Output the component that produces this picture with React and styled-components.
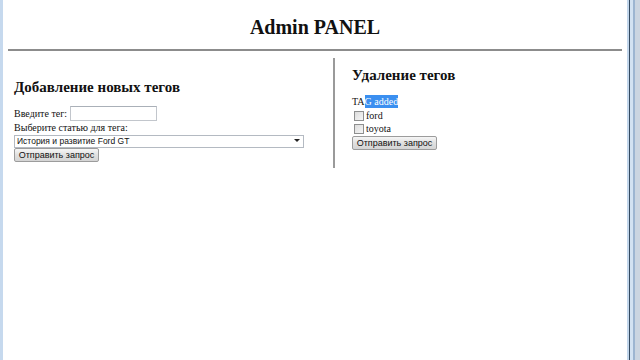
import React from "react";
import styled, { createGlobalStyle } from "styled-components";

const GlobalStyle = createGlobalStyle`
  html, body {
    margin: 0;
    padding: 0;
    height: 100%;
  }
  body {
    font-family: "Liberation Serif", "Times New Roman", serif;
    color: #111;
    background: #fff;
  }
`;

const Frame = styled.div`
  display: flex;
  height: 360px;
  width: 640px;
  overflow: hidden;
`;

const LeftEdge = styled.div`
  width: 3px;
  background: #c6d9ee;
`;

const RightEdge = styled.div`
  width: 13px;
  background: linear-gradient(
    to right,
    #c3d7ec 0px,
    #c3d7ec 2px,
    #34495f 2px,
    #34495f 3px,
    #d3e2f2 3px,
    #d3e2f2 6px,
    #9db5d1 6px,
    #9db5d1 8px,
    #cbd5e1 8px
  );
`;

const Page = styled.div`
  flex: 1;
  background: #fff;
`;

const Title = styled.h1`
  margin: 0;
  padding-top: 15px;
  font-size: 20px;
  line-height: 24px;
  font-weight: bold;
  text-align: center;
`;

const Rule = styled.hr`
  margin: 10px 5px 0;
  border: 0;
  border-top: 2px solid #8c8c8c;
`;

const Columns = styled.div`
  display: flex;
  align-items: flex-start;
`;

const Column = styled.section`
  width: ${(p) => p.$width || "auto"};
  padding-left: ${(p) => p.$padLeft}px;
  padding-top: ${(p) => p.$padTop}px;
  box-sizing: border-box;
`;

const Divider = styled.div`
  width: 2px;
  height: 110px;
  margin-top: 7px;
  background: #9a9a9a;
`;

const Heading = styled.h3`
  margin: 0;
  font-size: 15px;
  line-height: 18px;
  font-weight: bold;
`;

const Form = styled.form`
  margin-top: ${(p) => p.$gap}px;
  font-size: 10px;
  line-height: 13px;
`;

const Row = styled.div`
  display: flex;
  align-items: center;
  height: ${(p) => p.$h || 13}px;
  white-space: pre;
`;

const TextInput = styled.input`
  box-sizing: border-box;
  width: 87px;
  height: 15px;
  margin: 0;
  padding: 0 2px;
  border: 1px solid #c2c6cc;
  border-top-color: #aab0b8;
  font-size: 9px;
`;

const SelectWrap = styled.div`
  position: relative;
  width: 290px;
  height: 13px;
`;

const Select = styled.select`
  appearance: none;
  box-sizing: border-box;
  width: 100%;
  height: 13px;
  margin: 0;
  padding: 0 0 0 2px;
  border: 1px solid #b4bac2;
  background: #fff;
  font-family: "Liberation Sans", Arial, sans-serif;
  font-size: 8.5px;
  line-height: 11px;
  color: #111;
`;

const Arrow = styled.span`
  position: absolute;
  right: 4px;
  top: 5px;
  border-left: 3px solid transparent;
  border-right: 3px solid transparent;
  border-top: 3px solid #222;
  pointer-events: none;
`;

const Button = styled.button`
  box-sizing: border-box;
  width: ${(p) => p.$w}px;
  height: 14px;
  margin-top: 1px;
  padding: 0;
  border: 1px solid #9c9c9c;
  border-radius: 2px;
  background: linear-gradient(#f6f6f6, #e0e0e0 50%, #d4d4d4);
  font-family: "Liberation Sans", Arial, sans-serif;
  font-size: 9px;
  line-height: 12px;
  white-space: nowrap;
  color: #111;
`;

const Selected = styled.span`
  background: #3b8ff0;
  color: #fff;
`;

const Check = styled.input`
  appearance: none;
  box-sizing: border-box;
  width: 10px;
  height: 10px;
  margin: 0 2px 0 2px;
  border: 1px solid #8e8f8f;
  background: linear-gradient(135deg, #dcdcdc, #f6f6f6);
`;

const CheckList = styled.div`
  margin-top: 1px;
`;

export default function App() {
  return (
    <>
      <GlobalStyle />
      <Frame>
        <LeftEdge />
        <Page>
          <Title>Admin PANEL</Title>
          <Rule />
          <Columns>
            <Column $width="330px" $padLeft={11} $padTop={27}>
              <Heading>Добавление новых тегов</Heading>
              <Form $gap={10}>
                <Row $h={15}>
                  Введите тег: <TextInput type="text" />
                </Row>
                <Row>Выберите статью для тега:</Row>
                <SelectWrap>
                  <Select defaultValue="ford">
                    <option value="ford">История и развитие Ford GT</option>
                  </Select>
                  <Arrow />
                </SelectWrap>
                <Button type="button" $w={85}>
                  Отправить запрос
                </Button>
              </Form>
            </Column>
            <Divider />
            <Column $padLeft={17} $padTop={15}>
              <Heading>Удаление тегов</Heading>
              <Form $gap={11}>
                <Row>
                  TA<Selected>G added</Selected>
                </Row>
                <CheckList>
                  <Row>
                    <Check type="checkbox" />
                    ford
                  </Row>
                  <Row>
                    <Check type="checkbox" />
                    toyota
                  </Row>
                </CheckList>
                <Button type="button" $w={85}>
                  Отправить запрос
                </Button>
              </Form>
            </Column>
          </Columns>
        </Page>
        <RightEdge />
      </Frame>
    </>
  );
}
